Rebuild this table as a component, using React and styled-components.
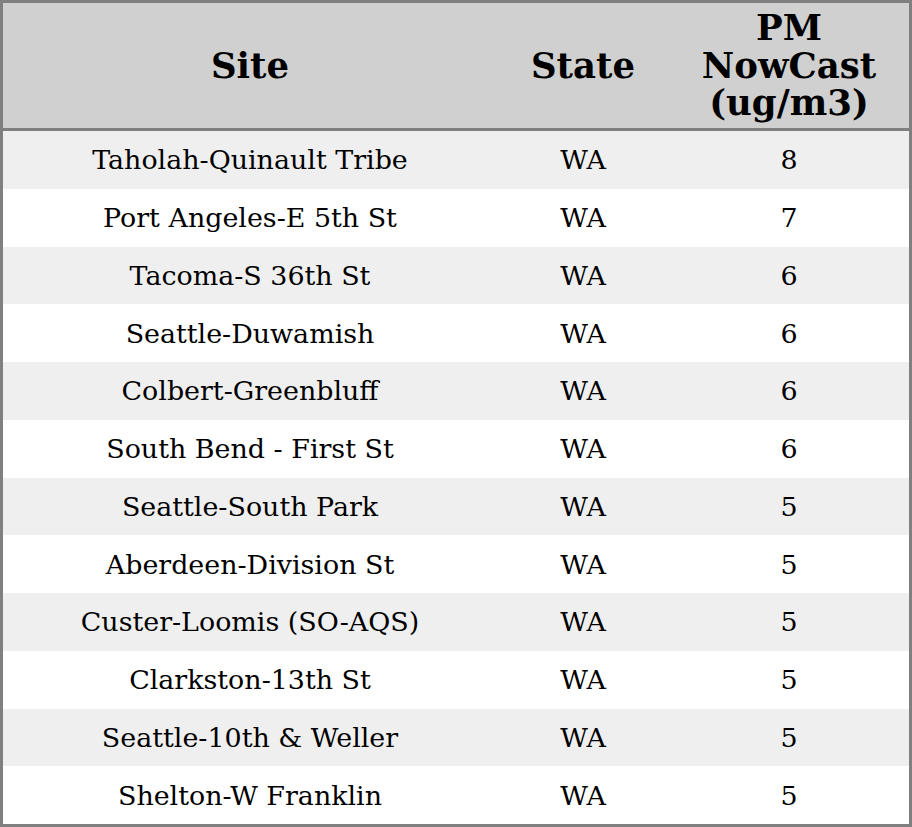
import { createGlobalStyle, styled } from "styled-components";

const GlobalStyle = createGlobalStyle`
  html, body {
    margin: 0;
    padding: 0;
    background: #ffffff;
  }
`;

const Table = styled.table`
  box-sizing: border-box;
  width: 912px;
  border-collapse: separate;
  border-spacing: 0;
  border: 3px solid #808080;
  font-family: "DejaVu Serif", serif;
  color: #000000;
  table-layout: fixed;
`;

const HeadCell = styled.th`
  box-sizing: border-box;
  width: ${(p) => p.$width}px;
  height: 128px;
  background: #d0d0d0;
  font-size: 35.5px;
  font-weight: 700;
  line-height: 37.5px;
  text-align: center;
  padding: 0;
  border-bottom: 3px solid #808080;
`;

const Row = styled.tr`
  background: ${(p) => (p.$odd ? "#efefef" : "#ffffff")};
`;

const Cell = styled.td`
  box-sizing: border-box;
  height: 57.75px;
  font-size: 26.9px;
  line-height: 31px;
  text-align: center;
  padding: 0;
`;

const sites = [
  ["Taholah-Quinault Tribe", "WA", 8],
  ["Port Angeles-E 5th St", "WA", 7],
  ["Tacoma-S 36th St", "WA", 6],
  ["Seattle-Duwamish", "WA", 6],
  ["Colbert-Greenbluff", "WA", 6],
  ["South Bend - First St", "WA", 6],
  ["Seattle-South Park", "WA", 5],
  ["Aberdeen-Division St", "WA", 5],
  ["Custer-Loomis (SO-AQS)", "WA", 5],
  ["Clarkston-13th St", "WA", 5],
  ["Seattle-10th & Weller", "WA", 5],
  ["Shelton-W Franklin", "WA", 5],
];

export default function App() {
  return (
    <>
      <GlobalStyle />
      <Table>
        <thead>
          <tr>
            <HeadCell $width={494}>Site</HeadCell>
            <HeadCell $width={172}>State</HeadCell>
            <HeadCell $width={240}>
              PM
              <br />
              NowCast
              <br />
              (ug/m3)
            </HeadCell>
          </tr>
        </thead>
        <tbody>
          {sites.map(([site, state, value], i) => (
            <Row key={site} $odd={i % 2 === 0}>
              <Cell>{site}</Cell>
              <Cell>{state}</Cell>
              <Cell>{value}</Cell>
            </Row>
          ))}
        </tbody>
      </Table>
    </>
  );
}
